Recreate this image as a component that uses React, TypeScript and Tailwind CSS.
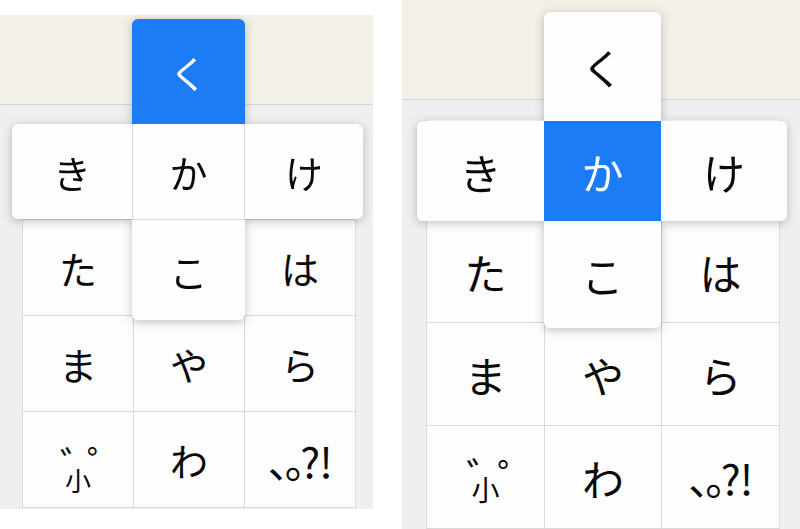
import React from "react";

const BLUE = "bg-[#1b7cf5]";

function SmallKey({ size }: { size: "sm" | "lg" }) {
  // ゛゜小 key: marks sit above the 小
  if (size === "lg") {
    return (
      <div className="relative mt-[24px] text-[28px] leading-none">
        小
        <span className="absolute left-[-5px] top-[-20px] h-[14px] text-[40px] leading-none">゛</span>
        <span className="absolute left-[26px] top-[-19px] h-[14px] text-[40px] leading-none">゜</span>
      </div>
    );
  }
  return (
    <div className="relative mt-[40px] text-[26px] leading-none">
      小
      <span className="absolute left-[-5px] top-[-23px] h-[14px] text-[38px] leading-none">゛</span>
      <span className="absolute left-[22px] top-[-24px] h-[14px] text-[38px] leading-none">゜</span>
    </div>
  );
}

function Punct() {
  return (
    <span className="text-[42px] leading-none [font-feature-settings:'palt']">
      <span className="tracking-[-5px]">、。</span>
      <span className="tracking-[-1px]">?!</span>
    </span>
  );
}

function Cell({ label, cls, size }: { label: string; cls: string; size: "sm" | "lg" }) {
  return (
    <div className={cls}>
      {label === "small" ? <SmallKey size={size} /> : label === "punct" ? <Punct /> : label}
    </div>
  );
}

// first row and the middle of the second sit under the flick popup
const grid = [
  ["", "", ""],
  ["た", "", "は"],
  ["ま", "や", "ら"],
  ["small", "わ", "punct"],
];

function LeftPanel() {
  const cell =
    "box-border w-[111px] h-[96px] bg-[#fdfdfd] border-r border-b border-[#d9d9d9] flex items-center justify-center";
  return (
    <div className="relative mt-[15px] w-[373px] h-[494px] bg-[#efefef] flex flex-col text-[38px] text-[#0a0a0a]">
      <div className="h-[90px] bg-[#f3f1e7] border-b border-[#d6d6d6]" />
      <div className="pt-[19px] pl-[22px]">
        <div className="grid grid-cols-[111px_111px_111px] w-fit border-l border-[#d9d9d9]">
          {grid.flat().map((k, i) => (
            <Cell key={i} label={k} cls={cell} size="sm" />
          ))}
        </div>
      </div>

      {/* flick popup */}
      <div className="absolute left-[12px] top-[4px] flex flex-col drop-shadow-[0_2px_5px_rgba(0,0,0,0.24)]">
        <div className={`ml-[120px] w-[113px] h-[105px] rounded-t-[6px] ${BLUE} text-white flex items-center justify-center`}>
          く
        </div>
        <div className="w-[351px] h-[95px] rounded-[6px] bg-[#fdfdfd] flex">
          <div className="w-[120px] flex items-center justify-center">き</div>
          <div className="box-border w-[113px] border-x border-[#dcdcdc] flex items-center justify-center">か</div>
          <div className="flex-1 flex items-center justify-center">け</div>
        </div>
        <div className="box-border ml-[120px] w-[113px] h-[101px] rounded-b-[6px] bg-[#fdfdfd] border-t border-[#dcdcdc] flex items-center justify-center">
          こ
        </div>
      </div>
    </div>
  );
}

function RightPanel() {
  const cell =
    "box-border h-[103px] bg-[#fdfdfd] border-r border-b border-[#d9d9d9] flex items-center justify-center";
  return (
    <div className="relative w-[398px] h-[529px] bg-[#efefef] flex flex-col text-[42px] text-[#0a0a0a] overflow-hidden">
      <div className="h-[101px] bg-[#f3f1e7] border-b border-[#d3d3d3]" />
      <div className="pt-[20px] pl-[24px]">
        <div className="grid grid-cols-[118px_117px_118px] grid-rows-[100px_103px_103px_103px] w-fit border-l border-[#d9d9d9]">
          {grid.flat().map((k, i) => (
            <Cell key={i} label={k} cls={cell + (i < 3 ? " h-[100px]" : "")} size="lg" />
          ))}
        </div>
      </div>

      {/* flick popup */}
      <div className="absolute left-[15px] top-[12px] flex flex-col drop-shadow-[0_2px_5px_rgba(0,0,0,0.24)]">
        <div className="ml-[127px] w-[117px] h-[109px] rounded-t-[6px] bg-[#fdfdfd] flex items-center justify-center">
          く
        </div>
        <div className="w-[370px] h-[100px] rounded-[6px] bg-[#fdfdfd] flex">
          <div className="w-[127px] flex items-center justify-center">き</div>
          <div className={`w-[117px] ${BLUE} text-white flex items-center justify-center`}>か</div>
          <div className="flex-1 flex items-center justify-center">け</div>
        </div>
        <div className="ml-[127px] w-[117px] h-[107px] rounded-b-[6px] bg-[#fdfdfd] flex items-center justify-center">
          こ
        </div>
      </div>
    </div>
  );
}

export default function App() {
  return (
    <div className="w-[800px] h-[529px] bg-white flex items-start font-['Noto_Sans_CJK_JP',sans-serif] overflow-hidden">
      <LeftPanel />
      <div className="w-[29px] shrink-0" />
      <RightPanel />
    </div>
  );
}
